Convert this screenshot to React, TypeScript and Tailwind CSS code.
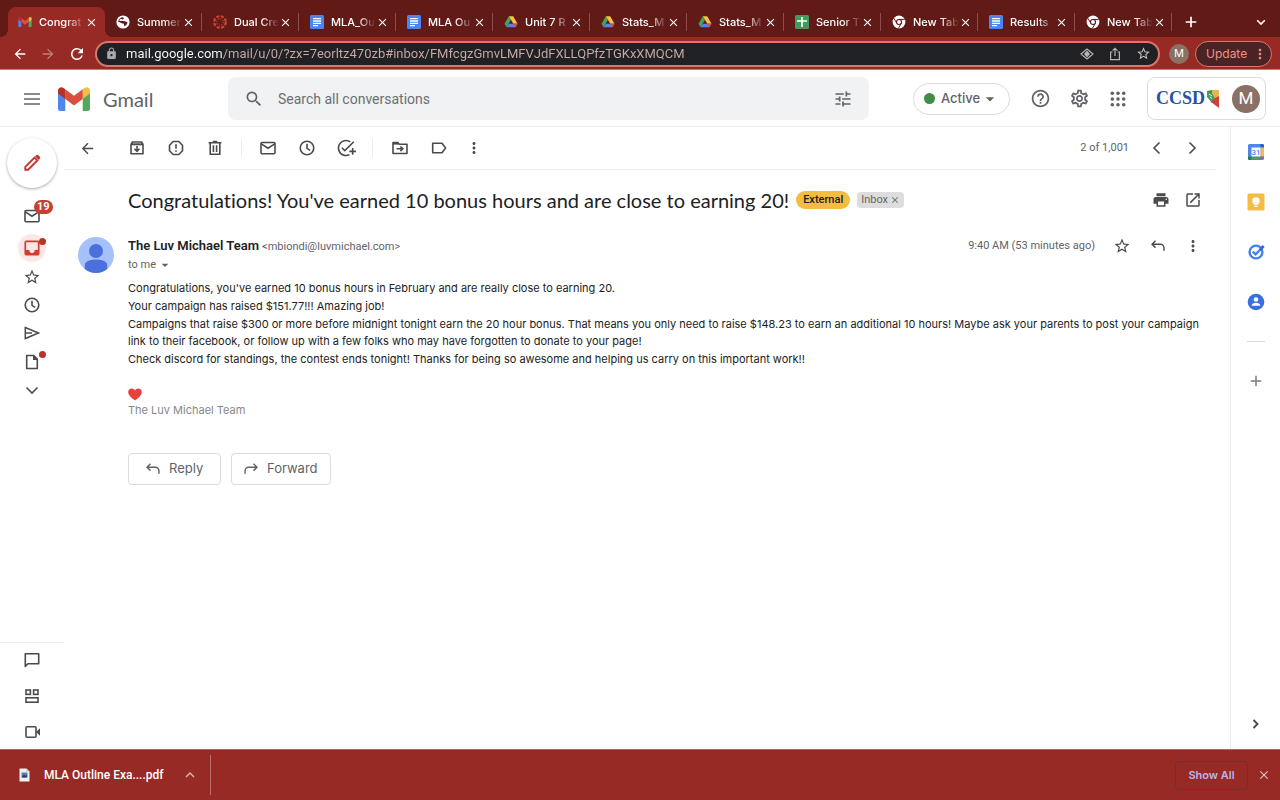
import type { ReactNode } from "react";
import {
  MdArrowBack,
  MdArrowDropDown,
  MdArrowForward,
  MdClose,
  MdHelpOutline,
  MdLock,
  MdMoreVert,
  MdOpenInNew,
  MdOutlineAddTask,
  MdOutlineSettings,
  MdPrint,
  MdRefresh,
  MdSearch,
  MdStarBorder,
  MdTune,
} from "react-icons/md";

type IconProps = { className?: string };

/* 20x20 line icon used all over the mail page */
const LineIcon = ({
  className = "size-5",
  children,
}: {
  className?: string;
  children: ReactNode;
}) => (
  <svg
    viewBox="0 0 20 20"
    fill="none"
    stroke="currentColor"
    strokeWidth="1.6"
    className={className}
    aria-hidden="true"
  >
    {children}
  </svg>
);

const ArchiveIcon = () => (
  <LineIcon>
    <path d="M4 6.5V15.8h12V6.5L14.6 4H5.4z" strokeLinejoin="round" />
    <path d="M4 6.3h12" strokeWidth="2" />
    <path d="M10 8v5M7.5 10.8L10 13.3l2.5-2.5" />
  </LineIcon>
);

const ReportIcon = () => (
  <LineIcon>
    <path
      d="M7.2 3.5h5.6l3.7 3.7v5.6l-3.7 3.7H7.2l-3.7-3.7V7.2z"
      strokeLinejoin="round"
    />
    <path d="M10 6.2v4.6M10 12.2v1.6" />
  </LineIcon>
);

const TrashIcon = () => (
  <LineIcon>
    <path d="M5.2 5.5v10.7h9.6V5.5M3.6 4.8h12.8M7.8 3.6h4.4" />
    <path d="M8.4 7.3v6.6M11.6 7.3v6.6" />
  </LineIcon>
);

const MailIcon = () => (
  <LineIcon>
    <rect x="3" y="4.5" width="14" height="11.2" rx="1" />
    <path d="M3.3 5.8L10 10.2l6.7-4.4" />
  </LineIcon>
);

const ClockIcon = () => (
  <LineIcon>
    <circle cx="10" cy="10" r="6.8" />
    <path d="M10 5.8v4.6l3.2 2" />
  </LineIcon>
);

const MoveIcon = () => (
  <LineIcon>
    <path d="M3 15.5V4.6h4.8l1.5 1.6H17v9.3z" strokeLinejoin="round" />
    <path d="M3 5.5h5.5" strokeWidth="2.2" />
    <path d="M6.5 10.8h6M10.4 8.5l2.4 2.3-2.4 2.3" />
  </LineIcon>
);

const LabelIcon = () => (
  <LineIcon>
    <path d="M3.7 5.3h9.3l3.6 4.7-3.6 4.7H3.7z" strokeLinejoin="round" />
  </LineIcon>
);

const ReplyIcon = ({ className }: IconProps) => (
  <LineIcon className={className}>
    <path d="M7.2 4.2L3.4 8l3.8 3.8M3.6 8h9a4 4 0 0 1 4 4v3.2" />
  </LineIcon>
);

const ForwardIcon = ({ className }: IconProps) => (
  <LineIcon className={className}>
    <path d="M12.8 4.2L16.6 8l-3.8 3.8M16.4 8h-9a4 4 0 0 0-4 4v3.2" />
  </LineIcon>
);

const ChevronIcon = ({ dir }: { dir: "left" | "right" | "down" }) => (
  <LineIcon>
    {dir === "left" && <path d="M12.5 4.5L7 10l5.5 5.5" />}
    {dir === "right" && <path d="M7.5 4.5L13 10l-5.5 5.5" />}
    {dir === "down" && <path d="M4.5 7.5L10 13l5.5-5.5" />}
  </LineIcon>
);

const PencilIcon = () => (
  <svg viewBox="0 0 24 24" className="size-[22px]" aria-hidden="true">
    <path d="M4.7 19.3v-3L14.8 6.2l3 3L7.7 19.3z" fill="none" stroke="#c5372c" strokeWidth="2.1" />
    <path
      d="M15.3 4.7l1-1a2 2 0 0 1 2.8 0l1.2 1.2a2 2 0 0 1 0 2.8l-1 1z"
      fill="#c5372c"
    />
  </svg>
);

const InboxIcon = () => (
  <svg viewBox="0 0 20 20" className="size-5" aria-hidden="true">
    <rect x="3.3" y="3.3" width="13.4" height="13.4" rx="1.2" fill="none" stroke="#d23b30" strokeWidth="1.7" />
    <path d="M3 12h4.5v1.5L9 15h2l1.5-1.5V12H17v5H3z" fill="#d23b30" />
  </svg>
);

const SendIcon = () => (
  <LineIcon>
    <path d="M3.3 4.5L16.5 10 3.3 15.5z" strokeWidth="1.5" />
    <path d="M3.3 10H10" strokeWidth="1.5" />
  </LineIcon>
);

const DraftIcon = () => (
  <LineIcon>
    <path d="M4.7 3.5h7L15.3 7v9.5H4.7z" strokeLinejoin="round" />
    <path d="M11 3v5h5z" fill="currentColor" stroke="none" />
  </LineIcon>
);

const ChatIcon = () => (
  <LineIcon>
    <path d="M3.3 16.5V3.8h13.4v10H5.8z" strokeLinejoin="round" />
  </LineIcon>
);

const SpacesIcon = () => (
  <LineIcon>
    <rect x="4" y="4" width="4.4" height="4.4" />
    <rect x="11.6" y="4" width="4.4" height="4.4" />
    <rect x="4" y="11.8" width="12" height="4.4" />
  </LineIcon>
);

const MeetIcon = () => (
  <LineIcon>
    <rect x="4" y="4.7" width="10" height="10.6" rx="1" />
    <path d="M14 10l4-3.8v7.6z" fill="currentColor" stroke="none" />
  </LineIcon>
);

const GmailLogo = ({ className }: IconProps) => (
  <svg viewBox="0 0 32 24" className={className} aria-hidden="true">
    <path d="M0 6h7.3v18H2.2A2.2 2.2 0 0 1 0 21.8z" fill="#4f86ee" />
    <path d="M24.7 6H32v15.8a2.2 2.2 0 0 1-2.2 2.2h-5.1z" fill="#54a75c" />
    <path d="M24.7 2.2l1.7-1.3C29-.9 32 .8 32 3.7V6.6l-7.3 5.5z" fill="#f2bd42" />
    <path d="M7.3 12.1V2.2L16 8.7l8.7-6.5v9.9L16 18.6z" fill="#d94f3d" />
    <path d="M0 3.7C0 .8 3-.9 5.6.9l1.7 1.3v9.9L0 6.6z" fill="#b53027" />
  </svg>
);

const GlobeIcon = () => (
  <svg viewBox="0 0 14 14" className="size-[14px]" aria-hidden="true">
    <circle cx="7" cy="7" r="6.6" fill="#fff" />
    <path
      d="M6.2 2.2c1.3.2 2 .9 1.5 1.7-.5.7-1.8.4-1.9 1.4 0 .9 1.4.6 2.4.8 1.3.3 1.7 1.2 3.3.9-.1 1.5-.7 2.7-1.8 3.6-1.2.9-1.9.3-1.7-.8.1-1-.4-1.2-1.4-1.3C5.2 8.3 4.2 7.2 2.2 6.9c.3-2.4 1.7-4.2 4-4.7z"
      fill="#611a16"
    />
    <path d="M4.6 3.8c1.6.1 2.2.6 1.5 1.6-.8 1-2.3.6-3 .2z" fill="#fff" />
  </svg>
);

const CanvasIcon = () => (
  <svg viewBox="0 0 14 14" className="size-[14px]" aria-hidden="true">
    <circle cx="7" cy="7" r="5.8" fill="none" stroke="#cf4436" strokeWidth="2.2" strokeDasharray="3.2 1.355" />
    <circle cx="7" cy="7" r="3.3" fill="none" stroke="#cf4436" strokeWidth="1.1" strokeDasharray="1.1 1.49" />
  </svg>
);

const DocsIcon = () => (
  <svg viewBox="0 0 14 14" className="size-[14px]" aria-hidden="true">
    <rect width="14" height="14" rx="1.5" fill="#4f83ee" />
    <path d="M3 3.7h8M3 6h8M3 8.3h8M3 10.6h5" stroke="#fff" strokeWidth="1.3" />
  </svg>
);

const SheetsIcon = () => (
  <svg viewBox="0 0 14 14" className="size-[14px]" aria-hidden="true">
    <rect width="14" height="14" rx="1.5" fill="#3f9c5b" />
    <path d="M7 2v10M2 6h10" stroke="#fff" strokeWidth="1.7" />
  </svg>
);

const DriveIcon = () => (
  <svg viewBox="0 0 14 14" className="size-[14px]" aria-hidden="true">
    <path d="M4.8 1.2L.5 8.7l2 3.6L7 4.7z" fill="#44a05a" />
    <path d="M4.8 1.2h4.4L13.5 8.7H9.3L7 4.7z" fill="#f6c244" />
    <path d="M4.6 8.7h8.9l-2 3.6h-9z" fill="#4f83ee" />
    <path d="M9.3 8.7h4.2l-2 3.6z" fill="#dc4b3e" />
  </svg>
);

const ChromeIcon = () => (
  <svg viewBox="0 0 14 14" className="size-[14px]" aria-hidden="true">
    <circle cx="7" cy="7" r="6.4" fill="#fff" />
    <circle cx="7" cy="7" r="2.5" fill="none" stroke="#611a16" strokeWidth="1.1" />
    <path d="M7 4.4h5.8M4.8 8.3L1.9 3.3M9.3 8.3l-2.9 5" stroke="#611a16" strokeWidth="1" />
  </svg>
);

const TABS = [
  { title: "Congrat", icon: <GmailLogo className="h-[10px] w-[14px]" /> },
  { title: "Summer", icon: <GlobeIcon /> },
  { title: "Dual Cre", icon: <CanvasIcon /> },
  { title: "MLA_Ou", icon: <DocsIcon /> },
  { title: "MLA Ou", icon: <DocsIcon /> },
  { title: "Unit 7 R", icon: <DriveIcon /> },
  { title: "Stats_M", icon: <DriveIcon /> },
  { title: "Stats_M", icon: <DriveIcon /> },
  { title: "Senior T", icon: <SheetsIcon /> },
  { title: "New Tab", icon: <ChromeIcon /> },
  { title: "Results", icon: <DocsIcon /> },
  { title: "New Tab", icon: <ChromeIcon /> },
];

const TabStrip = () => (
  <div className="flex h-[37px] items-end bg-[#611a16] pl-2 text-white">
    {TABS.map((tab, i) => (
      <div
        key={i}
        className={
          i === 0
            ? "relative flex h-[30px] w-[97px] items-center rounded-t-lg bg-[#982a25] pr-[7px] pl-[10px]"
            : "relative flex h-[30px] w-[97px] items-center pr-[7px] pl-[11px]"
        }
      >
        {i === 0 && (
          <>
            <span className="absolute bottom-0 -left-2 size-2 bg-[radial-gradient(circle_at_top_left,transparent_8px,#982a25_8px)]" />
            <span className="absolute -right-2 bottom-0 size-2 bg-[radial-gradient(circle_at_top_right,transparent_8px,#982a25_8px)]" />
          </>
        )}
        <span className="flex w-[14px] shrink-0 justify-center">{tab.icon}</span>
        <span className="ml-[7px] flex-1 text-[11px] font-medium whitespace-nowrap [mask-image:linear-gradient(to_right,black_60%,transparent)]">
          {tab.title}
        </span>
        <button type="button" aria-label="Close tab" className="shrink-0">
          <MdClose className="size-[13px]" />
        </button>
        {i > 0 && <span className="absolute right-0 bottom-[6px] h-[18px] w-px bg-[#8c4f4b]" />}
      </div>
    ))}
    <button type="button" aria-label="New tab" className="ml-3 flex h-[30px] w-4 items-center">
      <svg viewBox="0 0 14 14" className="size-[14px]" stroke="#fff" strokeWidth="1.7" aria-hidden="true">
        <path d="M7 1.7v10.6M1.7 7h10.6" />
      </svg>
    </button>
    <button type="button" aria-label="Search tabs" className="mr-3 ml-auto flex h-[30px] items-center">
      <svg viewBox="0 0 14 14" className="size-[14px]" fill="none" stroke="#fff" strokeWidth="1.6" aria-hidden="true">
        <path d="M3.2 5.2L7 9l3.8-3.8" />
      </svg>
    </button>
  </div>
);

const AddressBar = () => (
  <div className="flex h-[33px] items-center border-b border-[#c77c77] bg-[#982a25] pt-px pr-2 pl-3">
    <button type="button" aria-label="Back" className="text-white">
      <MdArrowBack className="size-4" />
    </button>
    <button type="button" aria-label="Forward" className="ml-3 text-[#c27f7b]">
      <MdArrowForward className="size-4" />
    </button>
    <button type="button" aria-label="Reload" className="ml-3 text-white">
      <MdRefresh className="size-[18px]" />
    </button>
    <div className="ml-[9px] flex h-[26px] min-w-0 flex-1 items-center rounded-full border-2 border-[#d9776c] bg-[#202124] pr-[7px] pl-2 text-[#b9b0b0]">
      <MdLock className="size-[13px] shrink-0 text-[#a8a9ac]" />
      <input
        aria-label="Address"
        defaultValue="mail.google.com/mail/u/0/?zx=7eorltz470zb#inbox/FMfcgzGmvLMFVJdFXLLQPfzTGKxXMQCM"
        className="ml-2 min-w-0 flex-1 bg-[linear-gradient(to_right,#ffffff_97px,#cbaaa8_97px)] bg-clip-text font-[Roboto,sans-serif] text-[13px] text-transparent outline-none"
      />
      <svg viewBox="0 0 14 14" className="size-[14px]" aria-hidden="true">
        <path d="M1 7L7 2l6 5-6 5z" fill="none" stroke="currentColor" strokeWidth="1.2" strokeLinejoin="round" />
        <path d="M4 7l3-3.5L10 7l-3 3.5z" fill="currentColor" />
      </svg>
      <svg viewBox="0 0 14 14" className="ml-[14px] size-[14px]" fill="none" stroke="currentColor" strokeWidth="1.2" aria-hidden="true">
        <path d="M4.5 5H2.6v7.6h8.8V5H9.5M7 9V1.5M4.6 3.7L7 1.3l2.4 2.4" />
      </svg>
      <MdStarBorder className="ml-[14px] size-[15px] shrink-0 text-[#cfc9c9]" />
    </div>
    <span className="ml-[9px] flex size-5 items-center justify-center rounded-full bg-[#8a7065] text-[11px] text-white">
      M
    </span>
    <button
      type="button"
      className="ml-[6px] flex h-[26px] w-[77px] items-center justify-between rounded-full border border-[#d9776c] bg-[#4a2424] pr-[3px] pl-[10px] text-[12px] text-[#ec9087]"
    >
      Update
      <MdMoreVert className="size-4" />
    </button>
  </div>
);

const Header = () => (
  <header className="flex h-[57px] items-center border-b border-[#eceded] pt-px pr-[14px] pl-6 text-[#5f6368]">
    <button type="button" aria-label="Main menu">
      <svg viewBox="0 0 16 12" className="h-3 w-4" stroke="currentColor" strokeWidth="1.7" aria-hidden="true">
        <path d="M0 1h16M0 6h16M0 11h16" />
      </svg>
    </button>
    <a
      href="#inbox"
      className="ml-[18px] flex w-[170px] shrink-0 items-center gap-[13px] font-[Lato,sans-serif] text-[20px]"
    >
      <GmailLogo className="h-6 w-8" />
      Gmail
    </a>
    <label className="flex h-[43px] min-w-0 flex-1 items-center rounded-lg bg-[#f0f2f3] px-4">
      <MdSearch className="size-5 shrink-0" />
      <input
        aria-label="Search all conversations"
        placeholder="Search all conversations"
        className="ml-[14px] min-w-0 flex-1 text-sm outline-none placeholder:text-[#6b6f74]"
      />
      <MdTune className="size-5 shrink-0" />
    </label>
    <button
      type="button"
      className="ml-11 flex h-8 w-[97px] shrink-0 items-center rounded-full border border-[#dadce0] pl-[10px] font-[Inter,sans-serif] text-[13px] font-medium"
    >
      <span className="mr-[6px] size-[11px] rounded-full bg-[#3f8e46]" />
      Active
      <MdArrowDropDown className="size-5" />
    </button>
    <button type="button" aria-label="Support" className="ml-5">
      <MdHelpOutline className="size-[21px]" />
    </button>
    <button type="button" aria-label="Settings" className="ml-[18px]">
      <MdOutlineSettings className="size-[21px]" />
    </button>
    <button type="button" aria-label="Google apps" className="ml-5">
      <svg viewBox="0 0 16 16" className="size-4" fill="currentColor" aria-hidden="true">
        {[2.3, 8, 13.7].map((y) =>
          [2.3, 8, 13.7].map((x) => <circle key={`${x}-${y}`} cx={x} cy={y} r="1.8" />),
        )}
      </svg>
    </button>
    <div className="ml-[21px] flex h-[43px] w-[119px] shrink-0 items-center rounded-lg border border-[#dadce0] pr-[5px] pl-2">
      <span className="font-['Liberation_Serif',serif] text-[18px] font-bold text-[#2a52a0]">CCSD</span>
      <svg viewBox="0 0 14 18" className="ml-px h-[18px] w-[14px]" aria-hidden="true">
        <path d="M1 1l5-1v5L1 6z" fill="#3c8f52" />
        <path d="M6 0h7v7L9 9 6 5z" fill="#e3b94f" />
        <path d="M1 1.5l6 3 2 4-3 4.5L1 7z" fill="#4c9b62" />
        <path d="M9 8l4-2v12L5 12z" fill="#cf3f35" />
        <path d="M3 4l3 2M4 7l2 1.5" stroke="#dfeee2" strokeWidth="1" />
      </svg>
      <button
        type="button"
        aria-label="Account"
        className="ml-auto flex size-7 items-center justify-center rounded-full bg-[#8a7065] text-[17px] text-white"
      >
        M
      </button>
    </div>
  </header>
);

const Rail = () => (
  <nav className="flex w-16 shrink-0 flex-col items-center pt-[11px] text-[#4a4b4d]">
    <button
      type="button"
      aria-label="Compose"
      className="flex size-[50px] items-center justify-center rounded-full bg-white shadow-[0_1px_3px_rgba(60,64,67,0.45)]"
    >
      <PencilIcon />
    </button>
    <a href="#mail" aria-label="Mail" className="relative mt-[18px]">
      <MailIcon />
      <span className="absolute -top-[6px] left-3 rounded-full bg-[#c5402f] px-[3px] text-[11px] leading-[14px] font-bold text-white">
        19
      </span>
    </a>
    <a
      href="#inbox"
      aria-label="Inbox"
      className="relative mt-2 flex size-7 items-center justify-center rounded-full bg-[#fae6e4]"
    >
      <InboxIcon />
      <span className="absolute top-1 right-0 size-[7px] rounded-full bg-[#bd3127]" />
    </a>
    <a href="#starred" aria-label="Starred" className="mt-[6px]">
      <MdStarBorder className="size-[18px]" />
    </a>
    <a href="#snoozed" aria-label="Snoozed" className="mt-[9px]">
      <ClockIcon />
    </a>
    <a href="#sent" aria-label="Sent" className="mt-2">
      <SendIcon />
    </a>
    <a href="#drafts" aria-label="Drafts" className="relative mt-[9px]">
      <DraftIcon />
      <span className="absolute -top-px -right-1 size-[7px] rounded-full bg-[#bd3127]" />
    </a>
    <button type="button" aria-label="More" className="mt-2">
      <ChevronIcon dir="down" />
    </button>
    <div className="mt-auto flex w-full flex-col items-center gap-4 border-t border-[#ececec] pt-[7px] pb-[7px]">
      <a href="#chat" aria-label="Chat">
        <ChatIcon />
      </a>
      <a href="#spaces" aria-label="Spaces">
        <SpacesIcon />
      </a>
      <a href="#meet" aria-label="Meet">
        <MeetIcon />
      </a>
    </div>
  </nav>
);

const Toolbar = () => (
  <div className="mr-[14px] flex h-[43px] items-center border-b border-[#ececec] pl-[15px] text-[#4a4b4d]">
    <button type="button" aria-label="Back to inbox">
      <MdArrowBack className="size-[17px]" />
    </button>
    <div className="ml-[31px] flex items-center gap-[19px]">
      <button type="button" aria-label="Archive"><ArchiveIcon /></button>
      <button type="button" aria-label="Report spam"><ReportIcon /></button>
      <button type="button" aria-label="Delete"><TrashIcon /></button>
    </div>
    <span className="mx-4 h-[18px] w-px bg-[#ececec]" />
    <div className="flex items-center gap-[19px]">
      <button type="button" aria-label="Mark as unread"><MailIcon /></button>
      <button type="button" aria-label="Snooze"><ClockIcon /></button>
      <button type="button" aria-label="Add to tasks"><MdOutlineAddTask className="size-5" /></button>
    </div>
    <span className="mr-[17px] ml-4 h-[18px] w-px bg-[#ececec]" />
    <div className="flex items-center gap-[19px]">
      <button type="button" aria-label="Move to"><MoveIcon /></button>
      <button type="button" aria-label="Labels"><LabelIcon /></button>
    </div>
    <button type="button" aria-label="More actions" className="ml-4">
      <MdMoreVert className="size-[18px]" />
    </button>
    <span className="ml-auto text-[11px] text-[#5f6368]">2 of 1,001</span>
    <button type="button" aria-label="Newer" className="ml-[18px]"><ChevronIcon dir="left" /></button>
    <button type="button" aria-label="Older" className="mr-[14px] ml-[15px]"><ChevronIcon dir="right" /></button>
  </div>
);

const Message = () => (
  <article className="pr-7 pl-[14px] text-[#202124]">
    <div className="flex items-center pt-4 pl-[50px]">
      <h1 className="font-[Lato,sans-serif] text-[20px] leading-[28px] [font-variant-ligatures:none]">
        Congratulations! You've earned 10 bonus hours and are close to earning 20!
      </h1>
      <span className="ml-[7px] rounded-full bg-[#f2bd42] px-[7px] text-[11px] leading-[18px] font-medium">
        External
      </span>
      <span className="ml-[7px] flex items-center gap-[2px] rounded bg-[#dddddd] px-1 text-[11px] leading-4 text-[#666666]">
        Inbox
        <button type="button" aria-label="Remove label"><MdClose className="size-[10px]" /></button>
      </span>
      <button type="button" aria-label="Print all" className="ml-auto text-[#4a4b4d]">
        <MdPrint className="size-[18px]" />
      </button>
      <button type="button" aria-label="Open in new window" className="ml-[14px] text-[#4a4b4d]">
        <MdOpenInNew className="size-[18px]" />
      </button>
    </div>

    <div className="mt-[23px] flex">
      <svg viewBox="0 0 36 36" className="size-9 shrink-0" aria-hidden="true">
        <circle cx="18" cy="18" r="18" fill="#a5c1fa" />
        <circle cx="18" cy="14" r="7" fill="#4a70dc" />
        <path d="M6.8 32v-4c0-3.4 5-5.5 11.2-5.5S29.2 24.6 29.2 28v4A18 18 0 0 1 6.8 32z" fill="#4a70dc" />
      </svg>
      <div className="ml-[14px] text-[11px] text-[#5f6368]">
        <div className="flex items-baseline gap-[3px] leading-[18px]">
          <span className="text-[13px] font-semibold text-[#202124]">The Luv Michael Team</span>
          <span>&lt;mbiondi@luvmichael.com&gt;</span>
        </div>
        <button type="button" className="flex items-center gap-px leading-[18px]">
          to me
          <MdArrowDropDown className="size-4" />
        </button>
      </div>
      <div className="ml-auto flex h-[18px] items-center text-[#4a4b4d]">
        <span className="mr-[18px] text-[11px] text-[#5f6368]">9:40 AM (53 minutes ago)</span>
        <button type="button" aria-label="Star"><MdStarBorder className="size-[18px]" /></button>
        <button type="button" aria-label="Reply" className="ml-[18px]"><ReplyIcon className="size-[18px]" /></button>
        <button type="button" aria-label="More" className="ml-[17px]"><MdMoreVert className="size-[18px]" /></button>
      </div>
    </div>

    <div className="mt-[6px] space-y-px pl-[50px] font-[Inter,sans-serif] text-[11px] leading-[17px] text-[#222222]">
      <p>Congratulations, you've earned 10 bonus hours in February and are really close to earning 20.</p>
      <p>Your campaign has raised $151.77!!! Amazing job!</p>
      <p>
        Campaigns that raise $300 or more before midnight tonight earn the 20 hour bonus. That means you only need to
        raise $148.23 to earn an additional 10 hours! Maybe ask your parents to post your campaign link to their
        facebook, or follow up with a few folks who may have forgotten to donate to your page!
      </p>
      <p>
        Check discord for standings, the contest ends tonight! Thanks for being so awesome and helping us carry on this
        important work!!
      </p>
      <svg viewBox="0 0 14 13" className="mt-5 h-[13px] w-[14px]" role="img" aria-label="heart">
        <path d="M7 12.5C4 10.3.2 7.5.2 4.1.2 1.9 1.8.5 3.7.5 5.1.5 6.3 1.2 7 2.4 7.7 1.2 8.9.5 10.3.5c1.9 0 3.5 1.4 3.5 3.6 0 3.4-3.8 6.2-6.8 8.4z" fill="#e8413b" />
      </svg>
      <p className="text-[#888888]">The Luv Michael Team</p>
    </div>

    <div className="mt-[34px] flex gap-[10px] pl-[50px] font-[Inter,sans-serif] text-[13px] text-[#5f6368]">
      <button type="button" className="flex h-8 w-[93px] items-center gap-[7px] rounded border border-[#dadce0] pl-[15px]">
        <ReplyIcon className="size-[18px]" />
        Reply
      </button>
      <button type="button" className="flex h-8 w-[100px] items-center gap-[7px] rounded border border-[#dadce0] pl-[10px]">
        <ForwardIcon className="size-[18px]" />
        Forward
      </button>
    </div>
  </article>
);

const SidePanel = () => (
  <aside className="flex w-[50px] shrink-0 flex-col items-center border-l border-[#ececec] pt-4 pb-4">
    <a href="#calendar" aria-label="Calendar">
      <svg viewBox="0 0 18 18" className="size-[18px]" aria-hidden="true">
        <rect x="1" y="1" width="16" height="16" rx="1.5" fill="#4f86ee" />
        <path d="M13.5 1H15.5A1.5 1.5 0 0 1 17 2.5v2h-3.5z" fill="#2b5fc4" />
        <path d="M13.5 4.5H17v9h-3.5z" fill="#f2bd42" />
        <path d="M4.5 13.5h9V17h-9z" fill="#44a05a" />
        <path d="M1 13.5h3.5V17H2.5A1.5 1.5 0 0 1 1 15.5z" fill="#2c7c42" />
        <path d="M13.5 13.5H17L13.5 17z" fill="#dc4b3e" />
        <path d="M4.5 4.5h9v9h-9z" fill="#fff" />
        <text x="9" y="12" textAnchor="middle" fontSize="8" fontWeight="500" fill="#4f86ee">31</text>
      </svg>
    </a>
    <a href="#keep" aria-label="Keep" className="mt-8">
      <svg viewBox="0 0 18 18" className="size-[18px]" aria-hidden="true">
        <rect x=".5" y=".5" width="17" height="17" rx="1.5" fill="#f2bd42" />
        <circle cx="9" cy="8" r="3.7" fill="#fff" />
        <path d="M7.3 10h3.4v2H7.3zM7.3 12.8h3.4v1.2H7.3z" fill="#fff" />
      </svg>
    </a>
    <a href="#tasks" aria-label="Tasks" className="mt-8">
      <svg viewBox="0 0 18 18" className="size-[18px]" fill="none" aria-hidden="true">
        <circle cx="9" cy="9" r="6.4" stroke="#4480f0" strokeWidth="2.4" />
        <path d="M5.8 8.6l2.8 2.8 5-5.2" stroke="#4480f0" strokeWidth="2.3" />
        <path d="M13 6.8l3.6-3.8" stroke="#2f66d8" strokeWidth="2.6" />
      </svg>
    </a>
    <a href="#contacts" aria-label="Contacts" className="mt-8">
      <svg viewBox="0 0 18 18" className="size-[18px]" aria-hidden="true">
        <circle cx="9" cy="9" r="8.3" fill="#3970dd" />
        <circle cx="9" cy="6.5" r="2.3" fill="#fff" />
        <path d="M4.7 12.8c0-2 2-3 4.3-3s4.3 1 4.3 3z" fill="#fff" />
      </svg>
    </a>
    <span className="mt-[30px] h-px w-[18px] bg-[#dadce0]" />
    <button type="button" aria-label="Get add-ons" className="mt-[31px] text-[#7b7d80]">
      <svg viewBox="0 0 16 16" className="size-4" stroke="currentColor" strokeWidth="1.5" aria-hidden="true">
        <path d="M8 2.8v10.4M2.8 8h10.4" />
      </svg>
    </button>
    <button type="button" aria-label="Hide side panel" className="mt-auto text-[#4a4b4d]">
      <svg viewBox="0 0 18 18" className="size-[18px]" fill="none" stroke="currentColor" strokeWidth="1.9" aria-hidden="true">
        <path d="M6.5 5l4 4-4 4" />
      </svg>
    </button>
  </aside>
);

const DownloadShelf = () => (
  <footer className="flex h-[51px] shrink-0 items-center border-t border-[#b9625d] bg-[#982a25] text-white">
    <div className="flex h-10 items-center border-r border-[#b9716d] pr-[14px] pl-[19px]">
      <svg viewBox="0 0 11 14" className="h-[14px] w-[11px]" aria-hidden="true">
        <path d="M.5.5h7L10.5 3.5v10H.5z" fill="#f0f0f0" />
        <path d="M7.5.5v3h3z" fill="#bdbdbd" />
        <path d="M2.5 4.5h6v5h-6z" fill="#5b7fb8" />
        <path d="M3 8.5l2-2 1.5 1.3L8 6.5v3H3z" fill="#27406e" />
      </svg>
      <a href="#download" className="ml-[14px] font-[Roboto,sans-serif] text-[12px] font-medium">
        MLA Outline Exa....pdf
      </a>
      <button type="button" aria-label="Download options" className="ml-5">
        <svg viewBox="0 0 12 12" className="size-3" fill="none" stroke="#d9b3b1" strokeWidth="1.5" aria-hidden="true">
          <path d="M2 8l4-4 4 4" />
        </svg>
      </button>
    </div>
    <button
      type="button"
      className="ml-auto h-[29px] w-[73px] rounded border border-[#71302f] text-[11px] font-semibold text-[#b9b4ec]"
    >
      Show All
    </button>
    <button type="button" aria-label="Close" className="mr-[9px] ml-[9px] text-[#dfc3c1]">
      <MdClose className="size-[14px]" />
    </button>
  </footer>
);

const App = () => {
  return (
    <div className="flex min-h-screen flex-col bg-white font-[Inter,sans-serif]">
      <TabStrip />
      <AddressBar />
      <div className="flex flex-1 flex-col font-[Roboto,sans-serif]">
        <Header />
        <div className="flex flex-1">
          <Rail />
          <main className="min-w-0 flex-1">
            <Toolbar />
            <Message />
          </main>
          <SidePanel />
        </div>
      </div>
      <DownloadShelf />
    </div>
  );
};

export default App;
